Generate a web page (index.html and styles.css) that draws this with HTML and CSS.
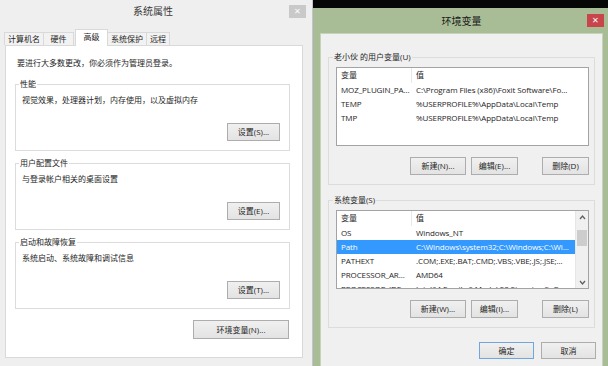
FILE: index.html
```html
<!DOCTYPE html>
<html lang="zh-CN">
<head>
    <meta charset="UTF-8">
    <title>系统属性 - 环境变量</title>
    <link rel="stylesheet" href="styles.css">
</head>
<body>
    <div class="win sys">
        <div class="titlebar">
            <span></span>
            <span class="title">系统属性</span>
            <span class="close">×</span>
        </div>
        <div class="sys-body">
            <div class="tabs">
                <span class="tab">计算机名</span>
                <span class="tab">硬件</span>
                <span class="tab active">高级</span>
                <span class="tab">系统保护</span>
                <span class="tab">远程</span>
            </div>
            <div class="panel">
                <p class="note">要进行大多数更改，你必须作为管理员登录。</p>
                <fieldset class="group">
                    <legend>性能</legend>
                    <p>视觉效果，处理器计划，内存使用，以及虚拟内存</p>
                    <div class="actions"><button>设置(S)...</button></div>
                </fieldset>
                <fieldset class="group">
                    <legend>用户配置文件</legend>
                    <p>与登录帐户相关的桌面设置</p>
                    <div class="actions"><button>设置(E)...</button></div>
                </fieldset>
                <fieldset class="group">
                    <legend>启动和故障恢复</legend>
                    <p>系统启动、系统故障和调试信息</p>
                    <div class="actions"><button>设置(T)...</button></div>
                </fieldset>
                <div class="actions env-btn"><button class="wide">环境变量(N)...</button></div>
            </div>
        </div>
    </div>

    <div class="desk">
        <div class="win env">
            <div class="titlebar">
                <span></span>
                <span class="title">环境变量</span>
                <span class="close red">×</span>
            </div>
            <div class="env-body">
                <fieldset class="group vars">
                    <legend>老小伙 的用户变量(U)</legend>
                    <div class="list">
                        <div class="rows">
                            <div class="row head"><span>变量</span><span>值</span></div>
                            <div class="row"><span>MOZ_PLUGIN_PA...</span><span>C:\Program Files (x86)\Foxit Software\Fo...</span></div>
                            <div class="row"><span>TEMP</span><span>%USERPROFILE%\AppData\Local\Temp</span></div>
                            <div class="row"><span>TMP</span><span>%USERPROFILE%\AppData\Local\Temp</span></div>
                        </div>
                    </div>
                    <div class="actions trio">
                        <button class="new">新建(N)...</button>
                        <button>编辑(E)...</button>
                        <button class="del">删除(D)</button>
                    </div>
                </fieldset>

                <fieldset class="group vars">
                    <legend>系统变量(S)</legend>
                    <div class="list">
                        <div class="rows">
                            <div class="row head"><span>变量</span><span>值</span></div>
                            <div class="row"><span>OS</span><span>Windows_NT</span></div>
                            <div class="row selected"><span>Path</span><span>C:\Windows\system32;C:\Windows;C:\Wi...</span></div>
                            <div class="row"><span>PATHEXT</span><span>.COM;.EXE;.BAT;.CMD;.VBS;.VBE;.JS;.JSE;...</span></div>
                            <div class="row"><span>PROCESSOR_AR...</span><span>AMD64</span></div>
                            <div class="row"><span>PROCESSOR_IDE...</span><span>Intel64 Family 6 Model 58 Stepping 9, G...</span></div>
                        </div>
                        <div class="scroll">
                            <svg class="arrow" width="11" height="11" viewBox="0 0 11 11"><polyline points="3,7 5.5,4 8,7" fill="none" stroke="#606060" stroke-width="1.3"/></svg>
                            <div class="track"><div class="thumb"></div></div>
                            <svg class="arrow" width="11" height="11" viewBox="0 0 11 11"><polyline points="3,4 5.5,7 8,4" fill="none" stroke="#606060" stroke-width="1.3"/></svg>
                        </div>
                    </div>
                    <div class="actions trio">
                        <button class="new">新建(W)...</button>
                        <button>编辑(I)...</button>
                        <button class="del">删除(L)</button>
                    </div>
                </fieldset>

                <div class="actions confirm">
                    <button class="ok">确定</button>
                    <button>取消</button>
                </div>
            </div>
        </div>
    </div>
</body>
</html>
```

FILE: styles.css
```css
html, body {
    margin: 0;
    padding: 0;
}

body {
    width: 608px;
    height: 366px;
    overflow: hidden;
    display: flex;
    background: #e9e9e9;
    color: #1e1e1e;
    font-family: "Open Sans", "Noto Sans CJK SC", sans-serif;
    font-size: 8px;
    line-height: 10px;
}

p {
    margin: 0;
}

/* window chrome */
.win {
    box-sizing: border-box;
    display: flex;
    flex-direction: column;
}

.titlebar {
    display: grid;
    grid-template-columns: 1fr auto 1fr;
    align-items: center;
}

.title {
    font-size: 10px;
    color: #3a3a3a;
}

.close {
    justify-self: end;
    width: 17px;
    height: 13px;
    line-height: 12px;
    text-align: center;
    font-size: 11px;
    color: #fff;
    background: #c9c9c9;
}

/* left: system properties */
.sys {
    width: 313px;
    height: 366px;
    background: #efefef;
    border-right: 1px solid #c4c3cf;
}

.sys .titlebar {
    height: 22px;
    padding: 0 6px 2px 0;
}

.sys-body {
    flex: 1;
    display: flex;
    flex-direction: column;
    padding: 5px 9px 8px 5px;
}

.tabs {
    display: flex;
    align-items: flex-end;
    height: 16px;
    margin-left: -1px;
}

.tab {
    height: 13px;
    line-height: 12px;
    min-width: 22px;
    padding: 0 3px;
    text-align: center;
    box-sizing: border-box;
    background: #f2f2f2;
    border: 1px solid #d9d9d9;
    border-bottom: none;
    margin-right: -1px;
}

.tab:nth-child(2) {
    min-width: 31px;
}

.tab.active {
    position: relative;
    z-index: 1;
    height: 17px;
    line-height: 13px;
    min-width: 33px;
    margin: 0 -1px -1px 2px;
    background: #fff;
}

.panel {
    flex: 1;
    background: #fff;
    border: 1px solid #d9d9d9;
    padding: 12px 12px 0 9px;
}

.note {
    margin-left: 2px;
}

.group {
    margin: 11px 0 0;
    padding: 6px 9px 9px 6px;
    min-width: 0;
    border: 1px solid #dcdcdc;
}

.group + .group {
    margin-top: 7px;
}

.group legend {
    padding: 0 1px;
    margin-left: -3px;
    line-height: 10px;
}

.actions {
    display: flex;
    justify-content: flex-end;
}

.group .actions {
    margin-top: 18px;
}

button {
    box-sizing: border-box;
    width: 53px;
    height: 18px;
    padding: 0;
    font: inherit;
    color: #1e1e1e;
    background: linear-gradient(#f0f0f0, #e3e3e3);
    border: 1px solid #adadad;
    border-radius: 0;
}

.env-btn {
    margin-top: 11px;
    padding-right: 1px;
}

button.wide {
    width: 96px;
    height: 19px;
}

/* right: environment variables */
.desk {
    flex: 1;
    display: flex;
    flex-direction: column;
    padding-top: 8px;
    background: #060606;
}

.env {
    flex: 1;
    background: #a8bd96;
    padding: 0 5px 0 7px;
}

.env .titlebar {
    height: 25px;
}

.env .title {
    color: #1a1a1a;
}

.close.red {
    background: #c8464b;
    margin-right: -1px;
}

.env-body {
    flex: 1;
    background: #f0f0f0;
    padding: 18px 7px 0;
    border: 1px solid #c5d3b9;
    border-bottom: none;
}

.group.vars {
    margin: 0;
    padding: 5px 5px 9px 7px;
}

.group.vars + .group.vars {
    margin-top: 10px;
}

.list {
    display: flex;
    height: 79px;
    box-sizing: border-box;
    border: 1px solid #a3a3a3;
    background: #fff;
    overflow: hidden;
}

.rows {
    flex: 1;
    min-width: 0;
}

.row {
    display: grid;
    grid-template-columns: 75px 1fr;
    height: 14px;
    line-height: 14px;
    white-space: nowrap;
    overflow: hidden;
    letter-spacing: -0.1px;
}

.row span {
    padding-left: 4px;
    overflow: hidden;
}

.row.head {
    height: 15px;
    line-height: 14px;
    letter-spacing: 0;
}

.row.head span:first-child {
    border-right: 1px solid #e8e8e8;
}

.row.selected {
    background: #3399ff;
    color: #fff;
}

.scroll {
    width: 12px;
    display: flex;
    flex-direction: column;
    align-items: center;
    background: #f0f0f0;
    border-left: 1px solid #e6e6e6;
}

.arrow {
    flex: none;
    margin-top: 1px;
}

.track {
    flex: 1;
    width: 10px;
}

.thumb {
    margin-top: 7px;
    height: 16px;
    background: #cdcdcd;
}

.group .trio {
    margin-top: 11px;
}

.trio button {
    width: 47px;
    margin-left: 5px;
}

.trio .new {
    width: 56px;
}

.trio .del {
    margin-left: 24px;
}

.confirm {
    margin: 14px -1px 0 0;
    gap: 7px;
}

.confirm button {
    width: 55px;
    height: 17px;
}

button.ok {
    border-color: #6fa6dc;
}
```
